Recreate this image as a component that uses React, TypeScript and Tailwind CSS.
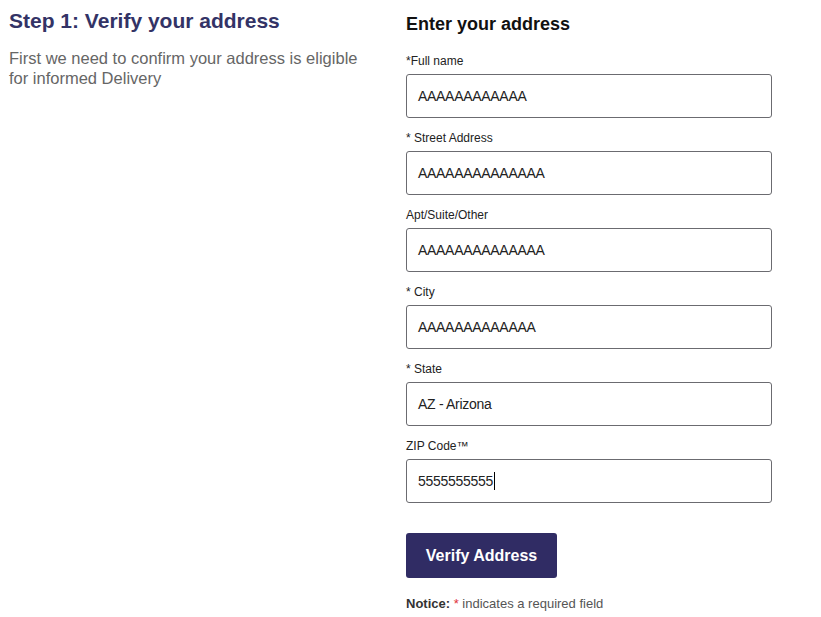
import React from "react";

const fields: { label: string; value: string; caret?: boolean }[] = [
  { label: "*Full name", value: "AAAAAAAAAAAA" },
  { label: "* Street Address", value: "AAAAAAAAAAAAAA" },
  { label: "Apt/Suite/Other", value: "AAAAAAAAAAAAAA" },
  { label: "* City", value: "AAAAAAAAAAAAA" },
  { label: "* State", value: "AZ - Arizona" },
  { label: "ZIP Code™", value: "5555555555", caret: true },
];

export default function App() {
  return (
    <div
      className="w-[821px] h-[617px] bg-white flex overflow-hidden"
      style={{ fontFamily: '"Liberation Sans", Arial, sans-serif' }}
    >
      <div className="w-[406px] pl-[9px] pt-[10px] pr-[40px]">
        <h1 className="text-[21px] leading-[22px] font-bold text-[#333366]">
          Step 1: Verify your address
        </h1>
        <p className="mt-[16px] text-[16.5px] leading-[20px] text-[#666666]">
          First we need to confirm your address is eligible for informed Delivery
        </p>
      </div>
      <div className="w-[366px] pt-[13px]">
        <h2 className="text-[18px] leading-[22px] font-bold text-[#111111]">
          Enter your address
        </h2>
        <div className="mt-[19px] flex flex-col gap-[13px]">
          {fields.map((f) => (
            <div key={f.label} className="flex flex-col">
              <label className="text-[12px] leading-[14px] text-[#222222] mb-[6px]">
                {f.label}
              </label>
              <div className="h-[44px] rounded-[3px] border-[1.5px] border-[#6b6b70] flex items-center pl-[11px] text-[14px] tracking-[-0.3px] text-[#222222]">
                <span>{f.value}</span>
                {f.caret && <span className="inline-block w-[1px] h-[18px] bg-black ml-[1px]" />}
              </div>
            </div>
          ))}
        </div>
        <button className="mt-[30px] w-[151px] h-[45px] rounded-[3px] bg-[#302c64] text-white text-[16px] font-bold">
          Verify Address
        </button>
        <p className="mt-[19px] text-[13px] leading-[14px] text-[#555555]">
          <span className="font-bold text-[#333333]">Notice:</span>{" "}
          <span className="text-[#e0303a]">*</span> indicates a required field
        </p>
      </div>
    </div>
  );
}
